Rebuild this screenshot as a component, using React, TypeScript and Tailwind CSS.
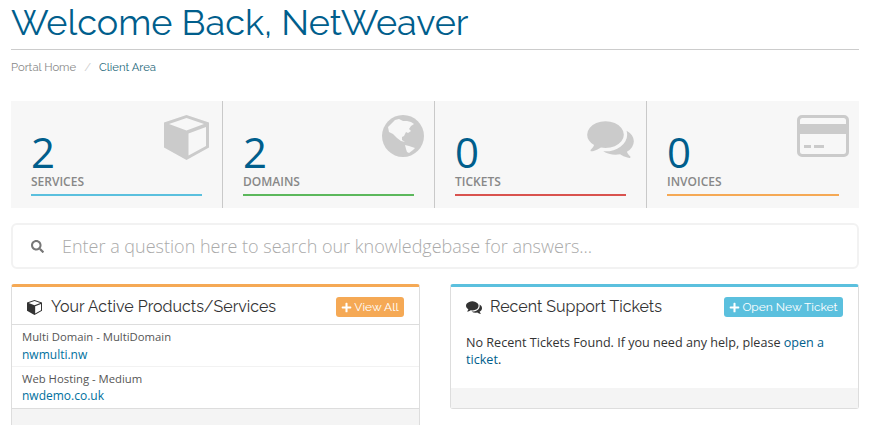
import type { ReactNode } from 'react';
import { FaSearch, FaPlus } from 'react-icons/fa';

const CubeIcon = ({ className }: { className?: string }) => (
  <svg viewBox="0 0 45 45" className={className} fill="currentColor">
    <path
      fillRule="evenodd"
      d="M22.500 0L45 7.500V32.500L22.500 45L0 32.500V7.500ZM22.500 3L5 9L22.500 15.500L40 9ZM24.500 18.500V40.500L42 31V12Z"
    />
  </svg>
);

const CommentsIcon = ({ className }: { className?: string }) => (
  <svg viewBox="0 128 1792 1536" className={className} fill="currentColor">
    <path d="M1408 768q0 139-94 257t-256.500 186.500-353.500 68.500q-86 0-176-16-124 88-278 128-36 9-86 16h-3q-11 0-20.500-8t-11.500-21q-1-3-1-6.500t.5-6.500 2-6l2.500-5 3.500-5.500 4-5 4.500-5 4-4.500q5-6 23-25t26-29.500 22.500-29 25-38.500 20.500-44q-124-72-195-177t-71-224q0-139 94-257t256.500-186.500 353.500-68.500 353.500 68.500 256.500 186.500 94 257zm384 256q0 120-71 224.500t-195 176.500q10 24 20.500 44t25 38.500 22.500 29 26 29.500 23 25q1 1 4 4.500t4.500 5 4 5 3.500 5.500l2.500 5 2 6 .5 6.500-1 6.500q-3 14-13 22t-22 7q-50-7-86-16-154-40-278-128-90 16-176 16-271 0-472-132 58 4 88 4 161 0 309-45t264-129q125-92 192-212t67-254q0-77-23-152 129 71 204 178t75 230z" />
  </svg>
);

const GlobeIcon = ({ className }: { className?: string }) => (
  <svg viewBox="0 0 42 42" className={className}>
    <circle cx="21" cy="21" r="21" fill="#cbcbcb" />
    <path
      fill="#f7f7f7"
      d="M13 5L17 4L21 6L25 6L29 7L32 9L29 11L27 14L29 16L26 18L24 17L22 21L20 22L20 25L23 27L19 26L15 23L11 19L7 17L6 12ZM23 30L27 31L33 33L31 35L27 38L25 37L24 34Z"
    />
  </svg>
);

const CardIcon = ({ className }: { className?: string }) => (
  <svg viewBox="0 0 52 42" className={className} fill="currentColor">
    <path
      fillRule="evenodd"
      d="M5 0h42a5 5 0 0 1 5 5v32a5 5 0 0 1-5 5H5a5 5 0 0 1-5-5V5a5 5 0 0 1 5-5zM3 5.500V9h46V5.500A2.500 2.500 0 0 0 46.500 3h-41A2.500 2.500 0 0 0 3 5.500zM3 19v17.500A2.500 2.500 0 0 0 5.500 39h41a2.500 2.500 0 0 0 2.500-2.500V19z"
    />
    <rect x="7" y="30" width="7" height="3" />
    <rect x="17" y="30" width="10" height="3" />
  </svg>
);

interface StatProps {
  count: number;
  label: string;
  bar: string;
  last?: boolean;
  icon: ReactNode;
}

function Stat({ count, label, bar, last, icon }: StatProps) {
  return (
    <div className={`relative px-[20px] pt-[26px] ${last ? '' : 'border-r border-[#c9c9c9]'}`}>
      {icon}
      <div className="text-[42px] leading-[50px] text-[#005e8c]">{count}</div>
      <div className="mt-[-4px] text-[12px] leading-[17px] font-semibold text-[#888]">{label}</div>
      <div className={`mt-[4px] h-[2px] ${bar}`} />
    </div>
  );
}

interface PanelProps {
  title: string;
  icon: ReactNode;
  accent: string;
  btnColor: string;
  btnLabel: string;
  btnWidth: string;
  footerH: string;
  children: ReactNode;
}

function Panel({ title, icon, accent, btnColor, btnLabel, btnWidth, footerH, children }: PanelProps) {
  return (
    <div className={`rounded-[3px] border border-t-[3px] border-[#ddd] bg-white ${accent}`}>
      <div className="flex items-center px-[15px] pt-[10px] pb-[7px]">
        <span className="w-[24px] text-[#333]">{icon}</span>
        <h3 className="flex-1 font-['Raleway','Lato',sans-serif] text-[16px] leading-[20px] text-[#333]">{title}</h3>
        <button className={`flex h-[20px] items-center justify-center rounded-[3px] text-[12px] text-white ${btnColor} ${btnWidth} font-['Raleway','Lato',sans-serif]`}>
          <FaPlus className="mr-[2px] text-[11px]" />
          {btnLabel}
        </button>
      </div>
      {children}
      <div className={`bg-[#f4f4f4] ${footerH}`} />
    </div>
  );
}

export default function App() {
  return (
    <div className="h-[425px] overflow-hidden bg-white pl-[11px] pr-[12px] font-['Open_Sans',sans-serif]">
      <h1 className="pt-[2px] pb-[7px] font-['Raleway','Lato',sans-serif] text-[36px] leading-[40px] text-[#005e8c] border-b border-[#ccc]">
        Welcome Back, NetWeaver
      </h1>

      <nav className="mt-[8px] mb-[-1px] flex h-[18px] items-center font-['Raleway','Lato',sans-serif] text-[11.300px] text-[#888]">
        <span>Portal Home</span>
        <span className="mx-[8px] text-[#ccc]">/</span>
        <span className="text-[#1f6a7c]">Client Area</span>
      </nav>

      <div className="mt-[26px] grid h-[107px] grid-cols-4 bg-[#f7f7f7]">
        <Stat
          count={2}
          label="SERVICES"
          bar="bg-[#5bc0de]"
          icon={<CubeIcon className="absolute right-[13px] top-[14px] h-[45px] w-[45px] text-[#cbcbcb]" />}
        />
        <Stat
          count={2}
          label="DOMAINS"
          bar="bg-[#5cb85c]"
          icon={<GlobeIcon className="absolute right-[10px] top-[14px] h-[42px] w-[42px]" />}
        />
        <Stat
          count={0}
          label="TICKETS"
          bar="bg-[#d9534f]"
          icon={<CommentsIcon className="absolute right-[11px] top-[17px] h-[40px] w-[49px] text-[#cbcbcb]" />}
        />
        <Stat
          count={0}
          label="INVOICES"
          bar="bg-[#f5a955]"
          last
          icon={<CardIcon className="absolute right-[10px] top-[14px] h-[42px] w-[52px] text-[#cbcbcb]" />}
        />
      </div>

      <div className="mt-[15px] flex h-[46px] items-center rounded-[6px] border-2 border-[#f2f2f2] bg-white">
        <FaSearch className="ml-[18px] mr-[18px] h-[13px] w-[13px] text-[#777]" />
        <span className="text-[18px] font-light text-[#aaa]">
          Enter a question here to search our knowledgebase for answers...
        </span>
      </div>

      <div className="mt-[15px] grid grid-cols-2 items-start gap-[30px]">
        <Panel
          title="Your Active Products/Services"
          icon={<CubeIcon className="h-[15px] w-[15px]" />}
          accent="border-t-[#f5a955]"
          btnColor="bg-[#f5a955]"
          btnLabel="View All"
          btnWidth="w-[68px]"
          footerH="h-[40px]"
        >
          <div className="border-t border-[#ddd] px-[10px] pt-[3px] pb-[3px] text-[11.300px] leading-[17px] text-[#555]">
            Multi Domain - MultiDomain
            <div className="mt-[1px] text-[12px] text-[#00709e]">nwmulti.nw</div>
          </div>
          <div className="border-t border-[#f2f2f2] px-[10px] pt-[3px] pb-[4px] text-[11.300px] leading-[17px] text-[#555]">
            Web Hosting - Medium
            <div className="text-[12px] text-[#00709e]">nwdemo.co.uk</div>
          </div>
          <div className="border-t border-[#ddd]" />
        </Panel>

        <Panel
          title="Recent Support Tickets"
          icon={<CommentsIcon className="h-[14px] w-[16px]" />}
          accent="border-t-[#5bc0de]"
          btnColor="bg-[#5bc0de]"
          btnLabel="Open New Ticket"
          btnWidth="w-[119px]"
          footerH="h-[20px]"
        >
          <div className="px-[15px] pt-[10px] pb-[20px] text-[12.600px] leading-[17px] text-[#333]">
            No Recent Tickets Found. If you need any help, please{' '}
            <span className="text-[#005e8c]">open a ticket</span>.
          </div>
        </Panel>
      </div>
    </div>
  );
}
